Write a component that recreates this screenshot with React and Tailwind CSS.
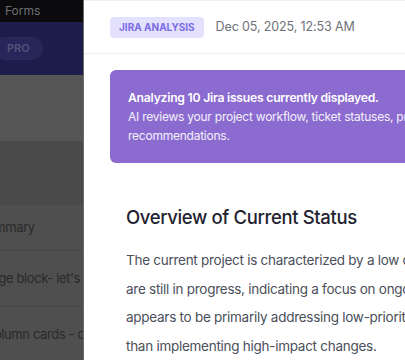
import { useState } from 'react'

const backdropRows = [
  { label: 'Summary', shift: '-ml-[21px]', height: 'h-[45px]' },
  { label: 'Message block- let\'s check', shift: '-ml-[40px]', height: 'h-[56px]' },
  { label: 'Two column cards - options', shift: '-ml-[41px]', height: 'h-[56px]' },
]

function Backdrop() {
  return (
    <div className="flex w-[83px] shrink-0 flex-col overflow-hidden bg-[#4f4f4f]">
      <div className="flex h-[22px] shrink-0 items-center bg-[#0b0b0d] pl-[5px] text-[12px] text-[#6f6f74]">
        <span className="whitespace-nowrap">Forms</span>
      </div>
      <div className="flex h-[53px] shrink-0 items-center bg-[#1e1c4a]">
        <span className="-ml-[6px] rounded-full border border-[#2c2a58] bg-[#282659] px-[12px] py-[2px] text-[11px] font-semibold text-[#52517a]">
          PRO
        </span>
      </div>
      <div className="h-[66px] shrink-0 bg-[#555555]" />
      <div className="h-[65px] shrink-0 border-b border-[#505050] bg-[#4a4a4a]" />
      {backdropRows.map((row) => (
        <div
          key={row.label}
          className={`flex shrink-0 items-center overflow-hidden border-b border-[#474747] bg-[#4f4f4f] ${row.height}`}
        >
          <span className={`${row.shift} whitespace-nowrap text-[13px] tracking-[-0.03em] text-[#2a2a2a]`}>{row.label}</span>
        </div>
      ))}
    </div>
  )
}

export default function App() {
  const [issues] = useState(10)

  return (
    <div
      className="flex h-[360px] w-[405px] overflow-hidden bg-white"
      style={{ fontFamily: 'Inter, "Noto Sans", sans-serif' }}
    >
      <Backdrop />

      <div className="flex min-w-0 flex-1 flex-col border-l border-[#6a6a6a] bg-white">
        <div className="flex h-[54px] shrink-0 items-center gap-[12px] border-y border-[#f0f0f4] pl-[26px]">
          <span className="rounded-[4px] bg-[#e3e1fd] px-[9px] py-[4px] text-[10px] font-bold leading-[13px] text-[#7a6ce4]">
            JIRA ANALYSIS
          </span>
          <span className="whitespace-nowrap text-[12.5px] tracking-[-0.01em] text-[#6e717b]">Dec 05, 2025, 12:53 AM</span>
        </div>

        <div className="flex flex-col pl-[26px] pt-[16px]">
          <div className="-mr-[240px] rounded-l-[6px] bg-[#8b6bcf] pb-[18px] pl-[18px] pt-[18px] text-white">
            <p className="whitespace-nowrap text-[12.2px] font-semibold leading-[19px] tracking-[-0.02em]">
              Analyzing {issues} Jira issues currently displayed.
            </p>
            <p className="text-[12px] leading-[19px] tracking-[-0.02em] text-white/90">
              <span className="block whitespace-nowrap">
                AI reviews your project workflow, ticket statuses, priorities, and assignees to provide actionable
              </span>
              <span className="block">recommendations.</span>
            </p>
          </div>

          <div className="px-[16px] pt-[42px]">
            <h2 className="whitespace-nowrap text-[18.5px] font-medium leading-[24px] tracking-[-0.02em] text-[#1f2330]">
              Overview of Current Status
            </h2>
            <div className="mt-[17px] -mr-[80px] text-[13.5px] leading-[28.5px] tracking-[-0.02em] text-[#4a4f5a]">
              <p className="whitespace-nowrap">The current project is characterized by a low completion rate</p>
              <p className="whitespace-nowrap">are still in progress, indicating a focus on ongoing work</p>
              <p className="whitespace-nowrap">appears to be primarily addressing low-priority items rather</p>
              <p className="whitespace-nowrap">than implementing high-impact changes.</p>
            </div>
          </div>
        </div>
      </div>
    </div>
  )
}
